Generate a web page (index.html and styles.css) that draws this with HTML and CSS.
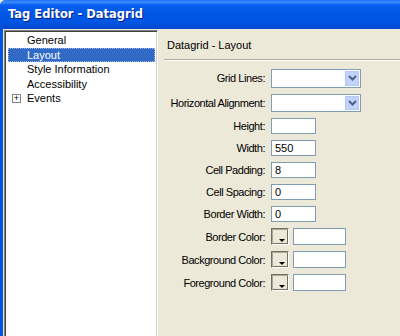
FILE: index.html
```html
<!DOCTYPE html>
<html lang="en">
<head>
  <meta charset="UTF-8" />
  <title>Tag Editor - Datagrid</title>
  <link rel="stylesheet" href="styles.css">
</head>
<body>
  <div class="window">
    <div class="titlebar">Tag Editor - Datagrid</div>

    <div class="body">
      <ul class="tree">
        <li class="item">General</li>
        <li class="item selected">Layout</li>
        <li class="item">Style Information</li>
        <li class="item">Accessibility</li>
        <li class="item"><span class="plus">+</span>Events</li>
      </ul>

      <div class="panel">
        <div class="panel-title">Datagrid - Layout</div>

        <div class="form">
          <label>Grid Lines:</label>
          <div class="select"><span class="arrow"><svg width="9" height="6" viewBox="0 0 9 6"><path d="M1 1 L4.5 4.5 L8 1" fill="none" stroke="#4d6185" stroke-width="2"/></svg></span></div>

          <label>Horizontal Alignment:</label>
          <div class="select"><span class="arrow"><svg width="9" height="6" viewBox="0 0 9 6"><path d="M1 1 L4.5 4.5 L8 1" fill="none" stroke="#4d6185" stroke-width="2"/></svg></span></div>

          <label>Height:</label>
          <div class="text"></div>

          <label>Width:</label>
          <div class="text">550</div>

          <label>Cell Padding:</label>
          <div class="text">8</div>

          <label>Cell Spacing:</label>
          <div class="text">0</div>

          <label>Border Width:</label>
          <div class="text">0</div>

          <label>Border Color:</label>
          <div class="color"><span class="swatch"></span><span class="color-text"></span></div>

          <label>Background Color:</label>
          <div class="color"><span class="swatch"></span><span class="color-text"></span></div>

          <label>Foreground Color:</label>
          <div class="color"><span class="swatch"></span><span class="color-text"></span></div>
        </div>
      </div>
    </div>
  </div>
</body>
</html>
```

FILE: styles.css
```css
body {
  margin: 0;
  padding: 0;
  font-family: "Liberation Sans", Arial, sans-serif;
  font-size: 11px;
  color: #000;
  background: #ece9d8;
  overflow: hidden;
}

.window {
  width: 400px;
  height: 336px;
  border-left: 3px solid #0553e1;
  border-top-left-radius: 6px;
  box-sizing: border-box;
  background: #ece9d8;
  display: flex;
  flex-direction: column;
}

.titlebar {
  height: 29px;
  margin-left: -3px;
  padding-left: 8px;
  border-top-left-radius: 6px;
  background: linear-gradient(#1e6bf0 0px, #3d8ffd 2px, #0a5ef0 5px, #0058e6 12px, #0055e3 22px, #0046cf 29px);
  color: #fff;
  font-family: "DejaVu Sans", sans-serif;
  font-weight: bold;
  font-size: 11.5px;
  line-height: 29px;
  text-shadow: 1px 1px 0 #0a1f8c;
  flex: none;
}

.body {
  flex: 1;
  min-height: 0;
  display: flex;
  padding: 1px 0 0 1px;
}

.tree {
  list-style: none;
  margin: 0;
  padding: 2px 2px;
  width: 148px;
  background: #fff;
  border-top: 1px solid #808080;
  border-left: 1px solid #808080;
  border-right: 1px solid #fff;
  box-shadow: inset 1px 1px 0 #404040, inset -1px 0 0 #d4d0c8;
  flex: none;
}

.item {
  height: 14.5px;
  line-height: 14.5px;
  padding-left: 19px;
  margin-left: 1px;
  position: relative;
}

.selected {
  background: #316ac5;
  color: #fff;
  outline: 1px dotted #a0b8e8;
  outline-offset: -1px;
}

.plus {
  position: absolute;
  left: 4px;
  top: 3px;
  width: 7px;
  height: 7px;
  border: 1px solid #848484;
  background: #fff;
  font-size: 9px;
  line-height: 7px;
  text-align: center;
  color: #000;
}

.panel {
  flex: 1;
  padding-top: 7px;
}

.panel-title {
  margin-left: 6px;
  padding-left: 3px;
  height: 16px;
  line-height: 16px;
  padding-bottom: 6px;
  border-bottom: 1px solid #aca899;
  box-shadow: 0 1px 0 #fff;
}

.form {
  display: grid;
  grid-template-columns: 107px auto;
  column-gap: 6px;
  row-gap: 6px;
  margin-top: 9px;
  align-items: center;
  justify-items: start;
}

.form label {
  justify-self: end;
  white-space: nowrap;
  letter-spacing: -0.45px;
}

.select {
  width: 90px;
  height: 18.5px;
  box-sizing: border-box;
  border: 1px solid #7f9db9;
  background: #fff;
  display: flex;
  justify-content: flex-end;
  padding: 1px;
}

.arrow {
  width: 14px;
  background: #c1d3fb;
  border: 1px solid #b7c8f0;
  box-sizing: border-box;
  display: flex;
  align-items: center;
  justify-content: center;
}

.text {
  width: 45px;
  height: 16px;
  box-sizing: border-box;
  border: 1px solid #7f9db9;
  background: #fff;
  padding-left: 3px;
  line-height: 14px;
}

.color {
  display: flex;
  gap: 4px;
}

.swatch {
  width: 18px;
  height: 17px;
  box-sizing: border-box;
  border: 1px solid;
  border-color: #716f64 #fff #fff #716f64;
  box-shadow: inset 1px 1px 0 #aca899, inset -1px -1px 0 #716f64;
  position: relative;
}

.swatch::after {
  content: "";
  position: absolute;
  right: 3px;
  bottom: 2px;
  border-left: 3px solid transparent;
  border-right: 3px solid transparent;
  border-top: 3px solid #000;
}

.color-text {
  width: 53px;
  height: 17px;
  box-sizing: border-box;
  border: 1px solid #7f9db9;
  background: #fff;
}
```
